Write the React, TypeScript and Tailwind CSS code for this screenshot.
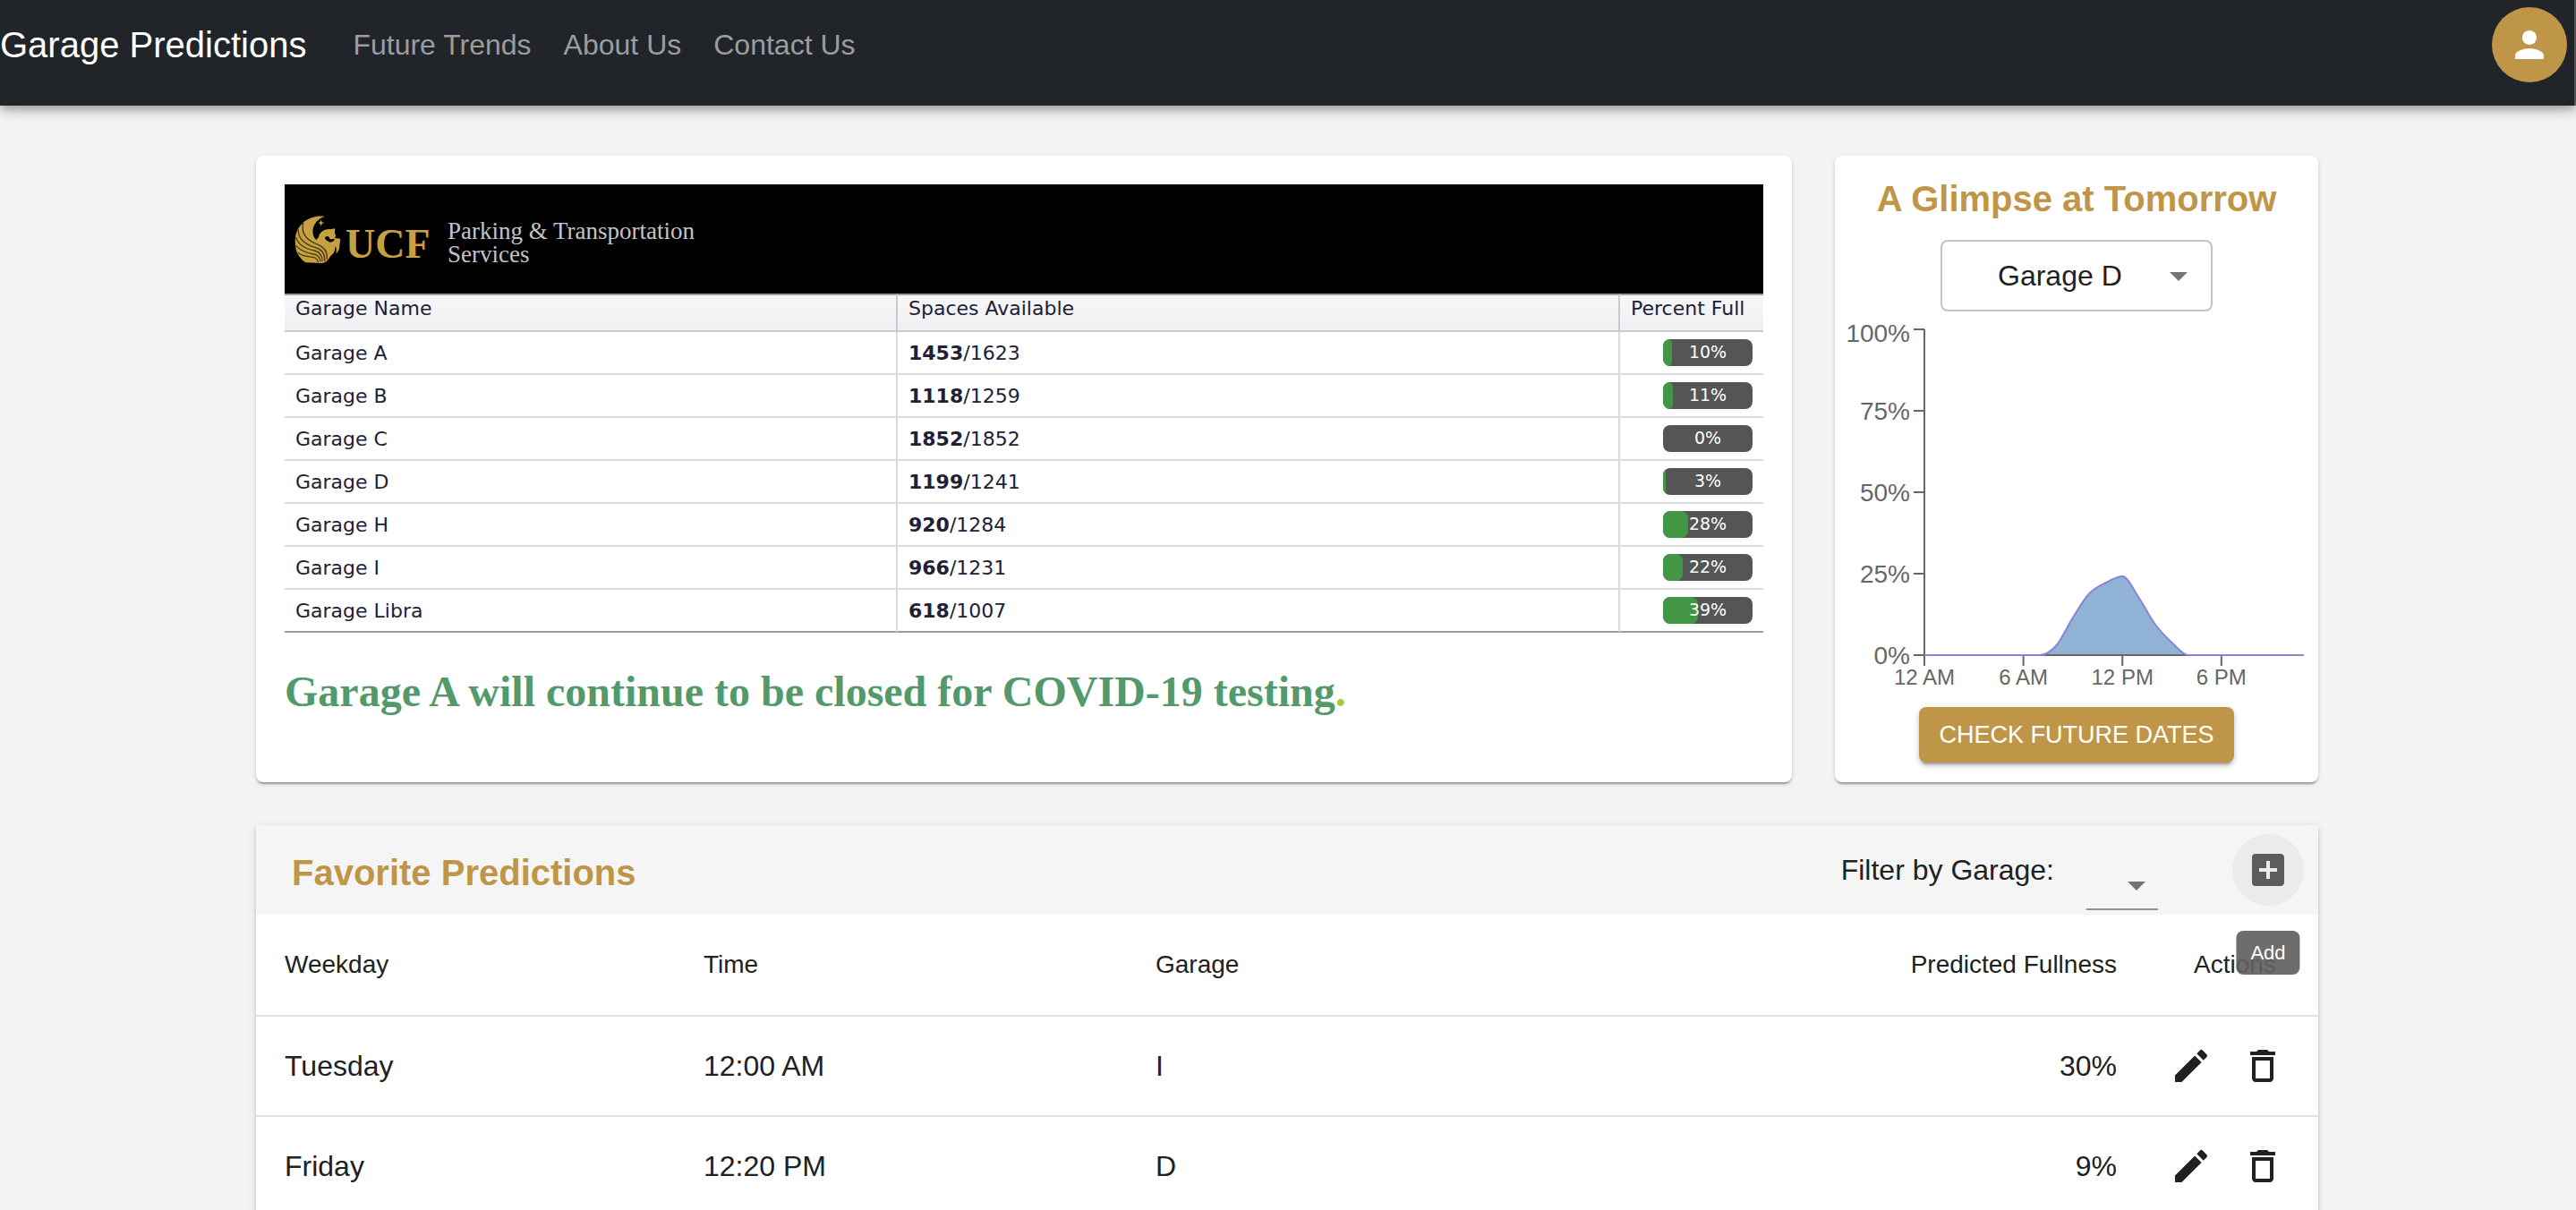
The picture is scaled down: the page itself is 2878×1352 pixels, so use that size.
import React from "react";
import { MdAddBox, MdArrowDropDown, MdEdit, MdDeleteOutline, MdPerson } from "react-icons/md";

const garages = [
  { name: "Garage A", free: 1453, total: 1623, percent: 10 },
  { name: "Garage B", free: 1118, total: 1259, percent: 11 },
  { name: "Garage C", free: 1852, total: 1852, percent: 0 },
  { name: "Garage D", free: 1199, total: 1241, percent: 3 },
  { name: "Garage H", free: 920, total: 1284, percent: 28 },
  { name: "Garage I", free: 966, total: 1231, percent: 22 },
  { name: "Garage Libra", free: 618, total: 1007, percent: 39 },
];

const favorites = [
  { weekday: "Tuesday", time: "12:00 AM", garage: "I", fullness: "30%" },
  { weekday: "Friday", time: "12:20 PM", garage: "D", fullness: "9%" },
];

function PegasusLogo() {
  return (
    <svg viewBox="0 0 192 198" className="h-[66px] w-16 shrink-0" aria-hidden="true">
      <path
        fill="#c6a142"
        d="M122 24C100 20 72 26 50 44C30 62 20 88 24 116C24 140 34 160 58 178L112 180C128 180 136 166 142 156C156 146 158 132 158 122C162 128 162 136 160 148C168 142 172 134 172 122L175 98L156 96C160 90 160 84 156 80L157 64L143 66C124 64 106 74 102 92L94 102C82 92 78 70 88 52C96 36 108 28 122 24Z"
      />
      <path fill="#000" d="M122 96C128 86 138 90 139 98C144 102 150 98 156 98C154 108 144 112 136 108C130 106 126 102 122 96Z" />
      <g fill="none" stroke="#4a3a12" strokeWidth="4" strokeLinecap="round">
        <path d="M50 46C42 84 66 106 100 118C120 126 132 142 130 166" />
        <path d="M34 68C32 100 60 118 92 128C112 134 124 148 122 172" />
        <path d="M26 94C34 122 60 132 88 138C104 142 114 154 114 172" />
        <path d="M26 122C42 140 62 146 86 150C98 152 106 160 108 174" />
        <path d="M34 146C50 158 68 158 84 160C94 162 98 168 100 176" />
      </g>
      <path fill="#c6a142" d="M110 35L113 43L121 45L113 48L110 56L107 48L100 45L107 43Z" />
    </svg>
  );
}

function Header() {
  return (
    <header className="relative flex items-center border-r-2 border-[#55575a] bg-[#212529] pt-2 pr-2 pb-[26px] shadow-[0_4px_8px_-2px_rgba(0,0,0,0.2),0_8px_10px_0_rgba(0,0,0,0.14),0_2px_20px_0_rgba(0,0,0,0.12)]">
      <a href="#home" className="text-[40px] leading-[60px] text-white">
        Garage Predictions
      </a>
      <nav className="ml-[52px] flex flex-1 gap-9 text-[32px] leading-[48px] text-[#9b9d9e]">
        <a href="#trends">Future Trends</a>
        <a href="#about">About Us</a>
        <a href="#contact">Contact Us</a>
      </nav>
      <button
        type="button"
        aria-label="Account"
        className="flex size-[84px] items-center justify-center rounded-full bg-[#bf9647] text-white"
      >
        <MdPerson className="size-12" />
      </button>
    </header>
  );
}

function ParkingCard() {
  return (
    <section className="col-span-9 rounded-lg bg-white p-8 shadow-[0_4px_2px_-2px_rgba(0,0,0,0.2),0_2px_2px_0_rgba(0,0,0,0.14),0_2px_6px_0_rgba(0,0,0,0.12)]">
      <div className="flex h-[122px] items-center bg-black pl-1 font-['Liberation_Serif',serif]">
        <PegasusLogo />
        <span className="w-[114px] pt-3 text-[46px] leading-[48px] font-bold text-[#c6a142]">UCF</span>
        <span className="pt-2 text-[27px] leading-[26px] text-[#c4c4c4]">
          Parking &amp; Transportation
          <br />
          Services
        </span>
      </div>
      <table className="w-full table-fixed border-separate border-spacing-0 text-left font-['DejaVu_Sans',sans-serif] text-[22px] leading-7 text-[#212037]">
        <colgroup>
          <col className="w-[685px]" />
          <col />
          <col className="w-40" />
        </colgroup>
        <thead>
          <tr className="bg-linear-to-b from-[#f7f7f8] to-[#eff0f3]">
            <th className="border-y-2 border-r-2 border-t-[#999ba4] border-r-[#c9c9d2] border-b-[#c9c9d2] px-3 pt-px pb-2.5 font-normal">
              Garage Name
            </th>
            <th className="border-y-2 border-r-2 border-t-[#999ba4] border-r-[#c9c9d2] border-b-[#c9c9d2] px-3 pt-px pb-2.5 font-normal">
              Spaces Available
            </th>
            <th className="border-y-2 border-t-[#999ba4] border-b-[#c9c9d2] pt-px pb-2.5 pl-3 font-normal whitespace-nowrap">
              Percent Full
            </th>
          </tr>
        </thead>
        <tbody className="[&>tr:last-child>td]:border-b-[#999ba4]">
          {garages.map((g) => (
            <tr key={g.name}>
              <td className="h-12 border-r-2 border-b-2 border-[#dadae1] px-3 pt-0.5">{g.name}</td>
              <td className="h-12 border-r-2 border-b-2 border-[#dadae1] px-3 pt-0.5">
                <strong className="font-bold">{g.free}</strong>/{g.total}
              </td>
              <td className="h-12 border-b-2 border-[#dadae1] pr-3">
                <div className="relative ml-auto h-[30px] w-[100px] overflow-hidden rounded-lg bg-[#555]">
                  <div className="h-full rounded-lg bg-[#439643]" style={{ width: `${g.percent}%` }} />
                  <span className="absolute inset-0 text-center text-[19px] leading-7 text-white">{g.percent}%</span>
                </div>
              </td>
            </tr>
          ))}
        </tbody>
      </table>
      <p className="mt-[38px] font-['Liberation_Serif',serif] text-[48px] leading-[56px] font-bold text-[#53996c]">
        Garage A will continue to be closed for COVID-19 testing<span className="text-[#a4c93a]">.</span>
      </p>
    </section>
  );
}

const hourly = [0, 0, 0, 0, 0, 0, 0, 0, 11, 42, 69, 81, 88, 64, 34, 14, 0, 0, 0, 0, 0, 0, 0, 0];
const left = 100;
const base = 384;
const step = 424 / 23;

/** Monotone cubic interpolation through the hourly values. */
function curve(values: number[]) {
  const y = values.map((v) => base - v);
  const d = y.slice(1).map((v, i) => (v - y[i]) / step);
  const slope = y.map((_, i) => {
    if (i === 0 || i === y.length - 1) return 0;
    const a = d[i - 1];
    const b = d[i];
    return a * b <= 0 ? 0 : Math.sign(a) * Math.min(Math.abs(a), Math.abs(b), Math.abs(a + b) / 4) * 2;
  });
  let path = `M${left},${y[0]}`;
  for (let i = 1; i < y.length; i++) {
    const x0 = left + (i - 1) * step;
    const x1 = left + i * step;
    path += `C${x0 + step / 3},${y[i - 1] + (slope[i - 1] * step) / 3} ${x1 - step / 3},${y[i] - (slope[i] * step) / 3} ${x1},${y[i]}`;
  }
  return path;
}

function Chart() {
  const line = curve(hourly);
  const percents = [100, 75, 50, 25, 0];
  const hours = ["12 AM", "6 AM", "12 PM", "6 PM"];
  return (
    <svg viewBox="0 0 540 442" className="block w-full" role="img" aria-label="Predicted fullness by hour">
      <path d={`${line}Z`} fill="#90b2d5" />
      <g stroke="#666" strokeWidth="2">
        <path d={`M${left},20V${base + 12}M${left},${base}H524`} fill="none" />
        {percents.map((p) => (
          <line key={p} x1={left - 12} x2={left} y1={base - p * 3.64} y2={base - p * 3.64} />
        ))}
        {hours.map((h, i) => (
          <line key={h} x1={left + i * 6 * step} x2={left + i * 6 * step} y1={base} y2={base + 12} />
        ))}
      </g>
      <path d={line} fill="none" stroke="#8884d8" strokeWidth="2" />
      <g fill="#666" fontSize="28" textAnchor="end">
        {percents.map((p) => (
          <text key={p} x="84" y={base - p * 3.64 + (p === 100 ? 14 : 10)}>
            {p}%
          </text>
        ))}
      </g>
      <g fill="#666" fontSize="24" textAnchor="middle">
        {hours.map((h, i) => (
          <text key={h} x={left + i * 6 * step} y={base + 33}>
            {h}
          </text>
        ))}
      </g>
    </svg>
  );
}

function GlimpseCard() {
  return (
    <section className="col-span-3 flex flex-col items-center rounded-lg bg-white pt-4 pb-[22px] shadow-[0_4px_2px_-2px_rgba(0,0,0,0.2),0_2px_2px_0_rgba(0,0,0,0.14),0_2px_6px_0_rgba(0,0,0,0.12)]">
      <h2 className="text-[40px] leading-[64px] font-bold whitespace-nowrap text-[#bf9647]">A Glimpse at Tomorrow</h2>
      <div className="relative mt-[14px]">
        <select
          aria-label="Garage"
          defaultValue="D"
          className="h-20 w-[304px] appearance-none rounded-lg border-2 border-[#c4c4c4] bg-white pl-[62px] text-[32px] text-[#212121]"
        >
          <option value="D">Garage D</option>
        </select>
        <MdArrowDropDown className="pointer-events-none absolute top-4 right-3.5 size-12 text-[#757575]" />
      </div>
      <Chart />
      <button
        type="button"
        className="h-[62px] rounded-lg bg-[#bf9647] px-[22px] text-[27px] whitespace-nowrap text-white shadow-[0_6px_2px_-4px_rgba(0,0,0,0.2),0_4px_4px_0_rgba(0,0,0,0.14),0_2px_10px_0_rgba(0,0,0,0.12)]"
      >
        CHECK FUTURE DATES
      </button>
    </section>
  );
}

function Favorites() {
  return (
    <section className="mt-12 bg-white text-[#212121] shadow-[0_6px_2px_-4px_rgba(0,0,0,0.2),0_4px_4px_0_rgba(0,0,0,0.14),0_2px_10px_0_rgba(0,0,0,0.12)]">
      <div className="flex h-[100px] items-center bg-[#f5f5f5] pr-4 pl-10">
        <h2 className="flex-1 pt-1.5 text-[40px] leading-[60px] font-bold text-[#bf9647]">Favorite Predictions</h2>
        <label htmlFor="filter" className="text-[32px] leading-[48px]">
          Filter by Garage:
        </label>
        <div className="relative mr-[83px] mb-[5px] ml-9 self-end">
          <select
            id="filter"
            className="block h-16 w-20 appearance-none border-b-2 border-[#8f8f8f] bg-transparent text-[32px]"
          >
            <option value=""></option>
          </select>
          <MdArrowDropDown className="pointer-events-none absolute right-0 bottom-1 size-12 text-[#757575]" />
        </div>
        <div className="relative">
          <button
            type="button"
            aria-label="Add favorite"
            className="flex size-20 items-center justify-center rounded-full bg-[#ebebeb] text-[#5c5c5c]"
          >
            <MdAddBox className="size-12" />
          </button>
          <div
            role="tooltip"
            className="absolute top-full left-1/2 z-10 mt-7 -translate-x-1/2 rounded-lg bg-[#616161]/92 px-4 py-2 text-[22px] leading-[33px] text-white"
          >
            Add
          </div>
        </div>
      </div>
      <table className="w-full table-fixed border-separate border-spacing-0 text-left text-[32px] leading-[46px]">
        <colgroup>
          <col className="w-[468px]" />
          <col className="w-[505px]" />
          <col />
          <col className="w-[320px]" />
          <col className="w-[193px]" />
        </colgroup>
        <thead>
          <tr className="h-[114px] text-[28px] [&>th]:border-b-2 [&>th]:border-[#e0e0e0] [&>th]:font-normal">
            <th className="px-8">Weekday</th>
            <th className="px-8">Time</th>
            <th className="px-8">Garage</th>
            <th className="px-8 text-right">Predicted Fullness</th>
            <th className="pl-[54px]">Actions</th>
          </tr>
        </thead>
        <tbody>
          {favorites.map((f) => (
            <tr key={f.weekday} className="h-28 [&>td]:border-b-2 [&>td]:border-[#e0e0e0]">
              <td className="px-8">{f.weekday}</td>
              <td className="px-8">{f.time}</td>
              <td className="px-8">{f.garage}</td>
              <td className="px-8 text-right">{f.fullness}</td>
              <td className="pl-[27px]">
                <div className="flex gap-8">
                  <button type="button" aria-label="Edit">
                    <MdEdit className="size-12" />
                  </button>
                  <button type="button" aria-label="Delete">
                    <MdDeleteOutline className="size-12" />
                  </button>
                </div>
              </td>
            </tr>
          ))}
        </tbody>
      </table>
    </section>
  );
}

export default function App() {
  return (
    <div className="h-screen overflow-hidden bg-[#f4f4f4] font-['Liberation_Sans',Arial,sans-serif]">
      <Header />
      <div className="pr-0.5">
        <main className="mx-auto max-w-[2304px] pt-14">
          <div className="grid grid-cols-12 gap-x-12">
            <ParkingCard />
            <GlimpseCard />
          </div>
          <Favorites />
        </main>
      </div>
    </div>
  );
}
